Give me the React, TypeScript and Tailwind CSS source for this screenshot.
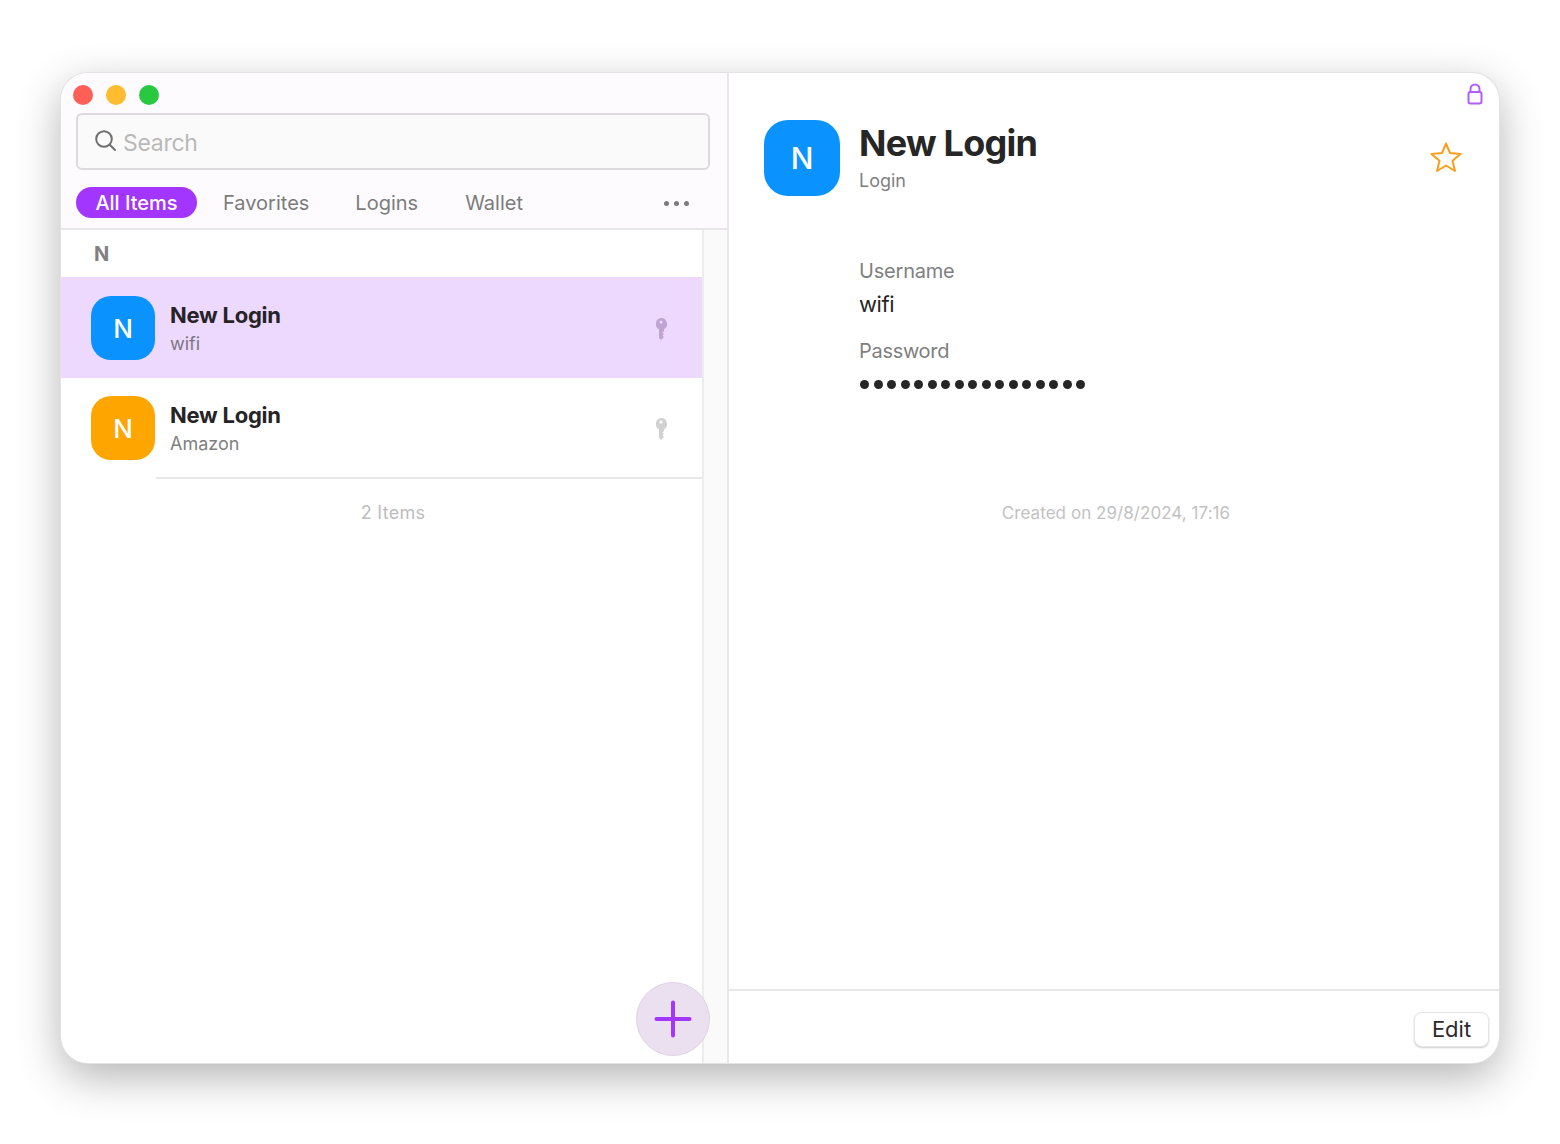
import React from "react";

const font = { fontFamily: "Inter, 'Liberation Sans', sans-serif" };

function Avatar({ big, color }: { big?: boolean; color: string }) {
  return (
    <div
      className={`flex shrink-0 items-center justify-center text-white font-medium ${color} ${
        big ? "h-[76px] w-[76px] rounded-[24px] text-[30px]" : "h-[64px] w-[64px] rounded-[20px] text-[26px]"
      }`}
    >
      N
    </div>
  );
}

function Key({ color }: { color: string }) {
  return (
    <svg width="14" height="24" viewBox="0 0 14 24" fill={color}>
      <path
        fillRule="evenodd"
        d="M7 1a6 6 0 0 1 3 11.200V14l-1.600 1.400L10 17l-1.600 1.500L10 20l-3 3-2-2V12.200A6 6 0 0 1 7 1Zm0 2.400a1.600 1.600 0 1 0 0 3.200 1.600 1.600 0 0 0 0-3.200Z"
      />
    </svg>
  );
}

function Row({ sub, color, selected }: { sub: string; color: string; selected?: boolean }) {
  return (
    <div className={`flex items-center pl-[30px] pr-[34px] pt-[1px] ${selected ? "h-[101px] bg-[#edd9fe]" : "h-[99px]"}`}>
      <Avatar color={color} />
      <div className="ml-[15px] flex-1">
        <div className="text-[22px] leading-[30px] font-bold tracking-[-0.25px] text-[#262326]">New Login</div>
        <div className={`mt-[1px] text-[18px] leading-[26px] ${selected ? "text-[#7d7582]" : "text-[#7f7f7f]"}`}>{sub}</div>
      </div>
      <div className="pt-[1px]">
        <Key color={selected ? "#bfa3d3" : "#d1d1d1"} />
      </div>
    </div>
  );
}

export default function App() {
  return (
    <div className="h-[1144px] w-[1560px] overflow-hidden bg-white pl-[61px] pt-[73px]" style={font}>
      <div className="relative flex h-[990px] w-[1438px] overflow-hidden rounded-[27px] bg-white shadow-[0_14px_44px_rgba(0,0,0,0.3)] ring-1 ring-[#e3e3e3]">
        {/* left pane */}
        <div className="relative flex w-[666px] shrink-0 flex-col">
          <div className="h-[157px] shrink-0 border-b-2 border-[#e8e6e8] bg-[#fdfbfd] pl-[15px] pr-[17px]">
            <div className="flex h-[40px] items-center gap-[13px] pt-[3px]">
              <span className="-ml-[3px] h-[20px] w-[20px] rounded-full bg-[#ff5f57]" />
              <span className="h-[20px] w-[20px] rounded-full bg-[#febc2e]" />
              <span className="h-[20px] w-[20px] rounded-full bg-[#28c840]" />
            </div>
            <div className="flex h-[57px] items-center rounded-[6px] border-2 border-[#dcdadc] bg-[#fbfafb] pl-[16px]">
              <svg className="-mt-[1px]" width="24" height="24" viewBox="0 0 24 24" fill="none" stroke="#6f6f6f" strokeWidth="2" strokeLinecap="round">
                <circle cx="10" cy="10" r="7.800" />
                <path d="M15.800 15.800l5.200 5.200" />
              </svg>
              <span className="ml-[5px] pt-[3px] text-[23px] tracking-[-0.3px] text-[#b9b9b9]">Search</span>
            </div>
            <div className="mt-[17px] flex h-[31px] items-center text-[20px] text-[#7c7c7c]">
              <span className="flex h-[31px] w-[121px] items-center justify-center rounded-full bg-[#a336fe] font-medium text-white">All Items</span>
              <span className="ml-[26px]">Favorites</span>
              <span className="ml-[46px]">Logins</span>
              <span className="ml-[47px]">Wallet</span>
              <span className="ml-auto mr-[21px] mt-[2px] flex gap-[5px]">
                <i className="h-[5px] w-[5px] rounded-full bg-[#7c7c7c]" />
                <i className="h-[5px] w-[5px] rounded-full bg-[#7c7c7c]" />
                <i className="h-[5px] w-[5px] rounded-full bg-[#7c7c7c]" />
              </span>
            </div>
          </div>
          <div className="flex min-h-0 flex-1">
            <div className="w-[641px] shrink-0">
              <div className="flex h-[47px] items-center pl-[33px] text-[20px] font-bold text-[#808080]">N</div>
              <Row sub="wifi" color="bg-[#0a93ff]" selected />
              <Row sub="Amazon" color="bg-[#ffa500]" />
              <div className="ml-[95px] h-[2px] bg-[#e8e8e8]" />
              <div className="mt-[21px] w-[664px] text-center text-[18px] leading-[26px] tracking-[0.3px] text-[#bdbdbd]">2 Items</div>
            </div>
            <div className="w-[25px] shrink-0 border-l-2 border-[#ececec] bg-[#fafafa]" />
          </div>
          <div className="absolute bottom-[7px] left-[575px] flex h-[74px] w-[74px] items-center justify-center rounded-full border border-[#ddd5e0] bg-[#ebe0f0]">
            <svg width="38" height="38" viewBox="0 0 38 38" stroke="#a336fe" strokeWidth="4" strokeLinecap="round">
              <path d="M19 2.500v33M2.500 19h33" />
            </svg>
          </div>
        </div>
        {/* right pane */}
        <div className="relative flex flex-1 flex-col border-l-2 border-[#e8e8e8]">
          <svg className="absolute right-[16px] top-[10px]" width="16" height="22" viewBox="0 0 16 22" fill="none" stroke="#b05cff" strokeWidth="2">
            <rect x="1.500" y="9" width="13" height="11.500" rx="2" />
            <path d="M3.500 9V6a4.500 4.500 0 0 1 9 0v3" />
          </svg>
          <div className="flex-1 pl-[35px]">
            <div className="flex pt-[47px]">
              <Avatar big color="bg-[#0a93ff]" />
              <div className="ml-[19px] flex-1">
                <div className="text-[36px] leading-[46px] font-bold tracking-[-0.75px] text-[#262626]">New Login</div>
                <div className="mt-[2px] text-[18px] leading-[26px] text-[#7f7f7f]">Login</div>
              </div>
              <svg className="mr-[37px] mt-[21px]" width="32" height="32" viewBox="0 0 32 32" fill="none" stroke="#fb9f1b" strokeWidth="2" strokeLinejoin="round">
                <path d="M16 2.500l4 9.500 10.500.9-8 6.800 2.500 10.300-9-5.500-9 5.500 2.500-10.300-8-6.800L12 12z" />
              </svg>
            </div>
            <div className="ml-[95px] mt-[61px]">
              <div className="text-[20px] leading-[28px] tracking-[-0.2px] text-[#808080]">Username</div>
              <div className="mt-[5px] text-[22px] leading-[28px] tracking-[-0.4px] text-[#262626]">wifi</div>
              <div className="mt-[19px] text-[20px] leading-[28px] tracking-[-0.3px] text-[#808080]">Password</div>
              <div className="mt-[4px] ml-[1px] flex h-[30px] items-center gap-[4.500px]">
                {Array.from({ length: 17 }).map((_, i) => (
                  <i key={i} className="h-[9px] w-[9px] rounded-full bg-[#262626]" />
                ))}
              </div>
            </div>
            <div className="-ml-[31px] mt-[101px] text-center text-[17px] leading-[26px] tracking-[0.05px] text-[#c2c2c2]">Created on 29/8/2024, 17:16</div>
          </div>
          <div className="flex h-[74px] shrink-0 items-start justify-end border-t-2 border-[#e8e8e8] pr-[10px] pt-[21px]">
            <div className="flex h-[35px] w-[75px] items-center justify-center rounded-[8px] border border-[#e6e6e6] bg-white text-[22px] text-[#2b2b2b] shadow-[0_1px_2px_rgba(0,0,0,0.2)]">
              Edit
            </div>
          </div>
        </div>
      </div>
    </div>
  );
}
